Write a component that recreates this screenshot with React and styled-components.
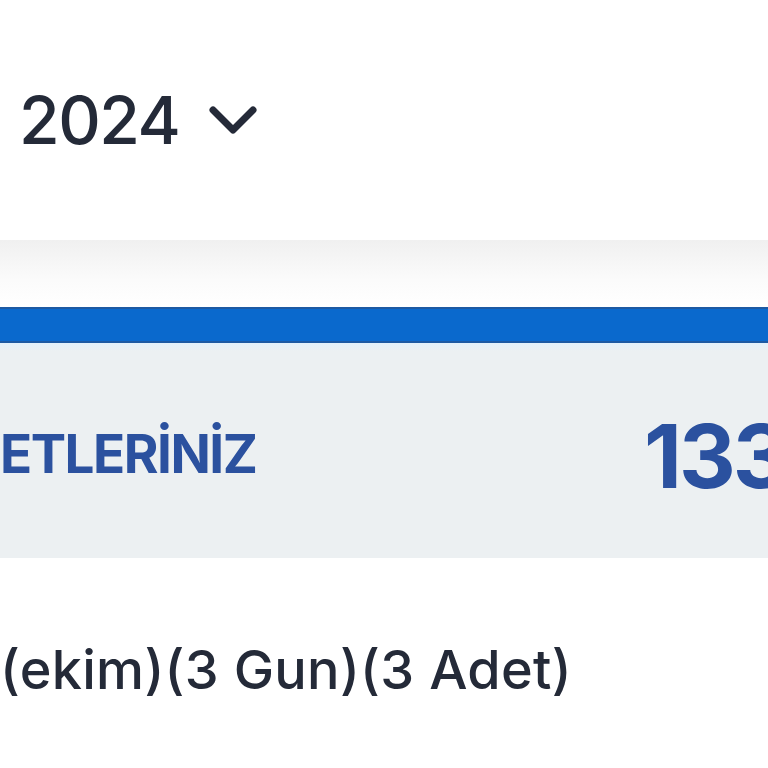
import styled, { createGlobalStyle } from "styled-components";

const GlobalStyle = createGlobalStyle`
html, body {
margin: 0;
padding: 0;
background: #ffffff;
overflow: hidden;
}
body {
font-family: Inter, "Noto Sans", sans-serif;
}
`

export default function App() {
    return (
        <Page>
            <GlobalStyle />
            <YearRow>
                <Year>2024</Year>
                <Chevron viewBox="0 0 48 30">
                    <path d="M4 4 L24 24 L44 4" />
                </Chevron>
            </YearRow>
            <ShadowBand />
            <BlueBar />
            <Panel>
                <PanelTitle>ETLERİNİZ</PanelTitle>
                <PanelValue>133</PanelValue>
            </Panel>
            <Detail>(ekim)(3 Gun)(3 Adet)</Detail>
        </Page>
    )
}

const Page = styled.div`
width: 768px;
height: 768px;
overflow: hidden;
background: #ffffff;
`

const YearRow = styled.div`
height: 240px;
display: flex;
align-items: center;
gap: 30px;
padding-left: 19px;
box-sizing: border-box;
`

const Year = styled.span`
font-size: 66px;
font-weight: 500;
color: #242a38;
letter-spacing: -1.5px;
`

const Chevron = styled.svg`
width: 48px;
height: 30px;
margin-top: 2px;
fill: none;
stroke: #242a38;
stroke-width: 7;
stroke-linecap: round;
stroke-linejoin: round;
`

const ShadowBand = styled.div`
height: 67px;
background: linear-gradient(#f0f0f0, #fbfbfb 60%, #ffffff);
`

const BlueBar = styled.div`
height: 32px;
background: #0a69cd;
border-top: 2px solid #1d5aa3;
border-bottom: 2px solid #1d5aa3;
`

const Panel = styled.div`
height: 215px;
display: flex;
align-items: center;
background: linear-gradient(#e3f1fb, #ecf0f2 8px, #ecf0f2);
white-space: nowrap;
`

const PanelTitle = styled.span`
flex: 0 0 644px;
font-size: 53px;
font-weight: 700;
color: #2b519f;
letter-spacing: -1.5px;
margin-top: 6px;
`

const PanelValue = styled.span`
font-size: 88px;
font-weight: 700;
color: #2b519f;
letter-spacing: -3px;
margin-top: 10px;
`

const Detail = styled.div`
height: 210px;
display: flex;
align-items: center;
font-size: 54px;
font-weight: 500;
color: #242a38;
white-space: nowrap;
letter-spacing: 0.3px;
margin-top: 6px;
`
